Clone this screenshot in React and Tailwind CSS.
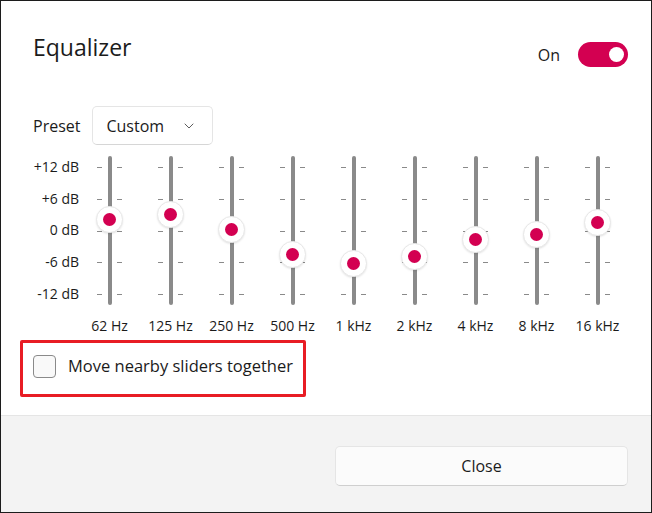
import React from "react";

const bands = [
  { label: "62 Hz", y: 68 },
  { label: "125 Hz", y: 63 },
  { label: "250 Hz", y: 78 },
  { label: "500 Hz", y: 103 },
  { label: "1 kHz", y: 112 },
  { label: "2 kHz", y: 105 },
  { label: "4 kHz", y: 88 },
  { label: "8 kHz", y: 83 },
  { label: "16 kHz", y: 71 },
];

const ticks = [16, 47.75, 79.5, 111.25, 143];
const dbLabels = ["+12 dB", "+6 dB", "0 dB", "-6 dB", "-12 dB"];

function SliderColumn({ y }) {
  return (
    <div className="relative w-[61px] h-[154px] pt-[5px] flex justify-center">
      <div className="w-[4px] h-[149px] rounded-full bg-[#8a8a8a]" />
      {ticks.map((t) => (
        <React.Fragment key={t}>
          <div
            className="absolute left-[18px] w-[5px] h-[1px] bg-[#8a8a8a]"
            style={{ top: t }}
          />
          <div
            className="absolute left-[38px] w-[5px] h-[1px] bg-[#8a8a8a]"
            style={{ top: t }}
          />
        </React.Fragment>
      ))}
      <div
        className="absolute left-[17px] w-[27px] h-[27px] rounded-full bg-white border border-[#e8e8e8] shadow-[0_1px_2px_rgba(0,0,0,0.10)] flex items-center justify-center"
        style={{ top: y - 13.5 }}
      >
        <div className="w-[13px] h-[13px] rounded-full bg-[#d30051]" />
      </div>
    </div>
  );
}

export default function App() {
  return (
    <div
      className="w-[652px] h-[513px] bg-white border border-[#1c1c1c] flex flex-col text-[#1b1b1b] overflow-hidden"
      style={{ fontFamily: '"Open Sans", "Noto Sans", sans-serif' }}
    >
      <div className="flex-1 pl-[32px] pr-[23px] pt-[31px] flex flex-col">
        <div className="h-[34px] flex items-start justify-between">
          <div className="text-[23px] leading-[30px]">Equalizer</div>
          <div className="mt-[10px] h-[25px] flex items-center gap-[18px]">
            <span className="text-[16px] leading-[22px] font-medium">On</span>
            <div className="w-[50px] h-[25px] rounded-full bg-[#d30051] flex items-center justify-end pr-[4px]">
              <div className="w-[15px] h-[15px] rounded-full bg-white" />
            </div>
          </div>
        </div>

        <div className="mt-[40px] flex items-center gap-[12px]">
          <span className="text-[16px] leading-[22px]">Preset</span>
          <div className="w-[121px] h-[39px] rounded-[5px] border border-[#e5e5e5] border-b-[#d6d6d6] bg-white flex items-center pl-[13px] pr-[18px] justify-between">
            <span className="text-[16px] leading-[22px]">Custom</span>
            <svg width="10" height="6" viewBox="0 0 10 6" fill="none">
              <path d="M1 1L5 5L9 1" stroke="#5c5c5c" strokeWidth="1" strokeLinecap="round" strokeLinejoin="round" />
            </svg>
          </div>
        </div>

        <div className="mt-[6px] h-[154px] flex">
          <div className="w-[46px] h-[154px] flex flex-col items-end">
            {dbLabels.map((l) => (
              <div key={l} className="h-[31.75px] shrink-0 flex items-center text-[14px] leading-[20px] whitespace-nowrap">
                {l}
              </div>
            ))}
          </div>
          {bands.map((b) => (
            <SliderColumn key={b.label} y={b.y} />
          ))}
        </div>

        <div className="mt-[11px] flex pl-[46px]">
          {bands.map((b) => (
            <div key={b.label} className="w-[61px] text-center text-[14px] leading-[20px] whitespace-nowrap">
              {b.label}
            </div>
          ))}
        </div>

        <div className="mt-[4px] ml-[-13px] w-[286px] h-[57px] border-[3px] border-[#e81c24] rounded-[2px] pl-[10px] pt-[11px]">
          <div className="flex items-center gap-[12px] h-[24px]">
            <div className="w-[23px] h-[23px] rounded-[4px] border border-[#8a8a8a] bg-[#f9f9f9]" />
            <span className="text-[16.5px] leading-[22px] whitespace-nowrap">Move nearby sliders together</span>
          </div>
        </div>
      </div>

      <div className="h-[97px] border-t border-[#e5e5e5] bg-[#f3f3f3] flex justify-end pr-[23px] pt-[30px]">
        <button className="w-[293px] h-[40px] rounded-[5px] bg-[#fbfbfb] border border-[#e5e5e5] border-b-[#cfcfcf] text-[16px] leading-[22px] text-[#1b1b1b]">
          Close
        </button>
      </div>
    </div>
  );
}
